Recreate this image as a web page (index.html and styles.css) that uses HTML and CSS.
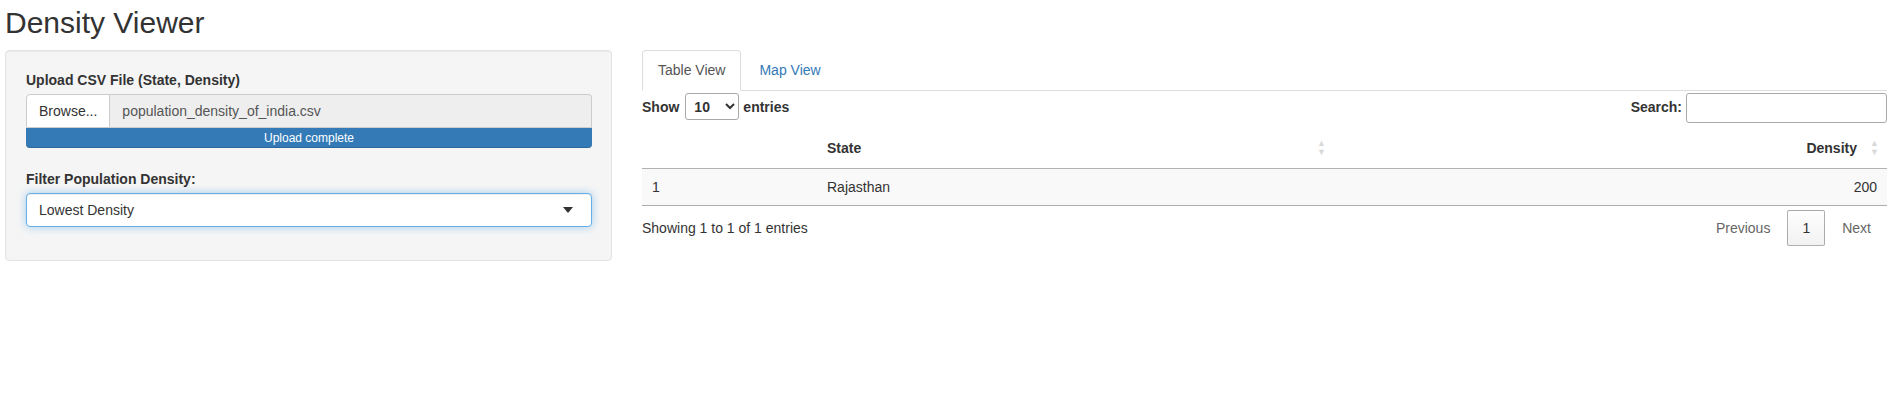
FILE: index.html
```html
<!DOCTYPE html>
<html>
<head>
<meta charset="utf-8">
<title>Density Viewer</title>
<link rel="stylesheet" href="styles.css">
</head>
<body>
<div class="page">
  <h2 class="title">Density Viewer</h2>
  <div class="layout">
    <div class="well">
      <div class="form-group">
        <label class="lbl">Upload CSV File (State, Density)</label>
        <div class="input-group">
          <span class="btn-browse">Browse...</span>
          <span class="file-name">population_density_of_india.csv</span>
        </div>
        <div class="progress">Upload complete</div>
      </div>
      <div class="form-group last">
        <label class="lbl">Filter Population Density:</label>
        <div class="selectize">
          <span>Lowest Density</span>
          <span class="caret"></span>
        </div>
      </div>
    </div>
    <div class="main">
      <ul class="tabs">
        <li class="tab active">Table View</li>
        <li class="tab">Map View</li>
      </ul>
      <div class="dt">
        <div class="dt-top">
          <label class="dt-len">Show <select class="len-select"><option>10</option></select> entries</label>
          <label class="dt-search">Search: <input class="search-input" type="text"></label>
        </div>
        <table class="dt-table">
          <thead>
            <tr>
              <th class="c-idx"></th>
              <th class="c-state sortable">State<span class="sort"><i>&#9650;</i><i>&#9660;</i></span></th>
              <th class="c-dens sortable right">Density<span class="sort"><i>&#9650;</i><i>&#9660;</i></span></th>
            </tr>
          </thead>
          <tbody>
            <tr class="odd">
              <td class="cell">1</td>
              <td class="cell">Rajasthan</td>
              <td class="cell right">200</td>
            </tr>
          </tbody>
        </table>
        <div class="dt-bottom">
          <div class="dt-info">Showing 1 to 1 of 1 entries</div>
          <div class="dt-paging">
            <span class="pg disabled">Previous</span>
            <span class="pg current">1</span>
            <span class="pg disabled">Next</span>
          </div>
        </div>
      </div>
    </div>
  </div>
</div>
</body>
</html>
```

FILE: styles.css
```css
* { box-sizing: border-box; }
html, body {
  margin: 0;
  padding: 0;
  background: #fff;
  font-family: "Liberation Sans", Arial, Helvetica, sans-serif;
  font-size: 14px;
  line-height: 20px;
  color: #333;
}
.page {
  padding: 6px 0 0 5px;
}
.title {
  margin: 0 0 11px 0;
  font-size: 30px;
  font-weight: 500;
  line-height: 33px;
  color: #333;
}
.layout {
  display: grid;
  grid-template-columns: 607px 1245px;
  column-gap: 30px;
  align-items: start;
}
.well {
  background: #f5f5f5;
  border: 1px solid #e3e3e3;
  border-radius: 4px;
  box-shadow: inset 0 1px 1px rgba(0,0,0,0.05);
  padding: 19px 19px 19px 20px;
}
.form-group { margin-bottom: 21px; }
.form-group.last { margin-bottom: 14px; }
.lbl {
  display: block;
  font-weight: 700;
  margin-bottom: 4px;
}
.input-group {
  display: flex;
  height: 34px;
}
.btn-browse {
  display: flex;
  align-items: center;
  padding: 6px 12px;
  background: #fff;
  border: 1px solid #ccc;
  border-radius: 4px 0 0 0;
  color: #333;
}
.file-name {
  flex: 1;
  display: flex;
  align-items: center;
  padding: 6px 12px;
  background: #eee;
  border: 1px solid #ccc;
  border-left: none;
  border-radius: 0 4px 0 0;
  color: #555;
}
.progress {
  height: 20px;
  background: #337ab7;
  border-radius: 0 0 4px 4px;
  color: #fff;
  font-size: 12px;
  line-height: 20px;
  text-align: center;
  box-shadow: inset 0 -1px 0 rgba(0,0,0,0.15);
}
.selectize {
  display: flex;
  align-items: center;
  justify-content: space-between;
  height: 34px;
  padding: 6px 18px 6px 12px;
  background: #fff;
  border: 1px solid #66afe9;
  border-radius: 4px;
  box-shadow: inset 0 1px 1px rgba(0,0,0,0.075), 0 0 8px rgba(102,175,233,0.6);
  color: #333;
}
.caret {
  width: 0;
  height: 0;
  border-style: solid;
  border-width: 6px 5px 0 5px;
  border-color: #333 transparent transparent transparent;
}
.main { min-width: 0; }
.tabs {
  list-style: none;
  margin: 0;
  padding: 0;
  display: flex;
  border-bottom: 1px solid #ddd;
}
.tab {
  margin: 0 2px -1px 0;
  padding: 9px 15px 10px 15px;
  border: 1px solid transparent;
  border-radius: 4px 4px 0 0;
  color: #337ab7;
  line-height: 20px;
}
.tab.active {
  color: #555;
  background: #fff;
  border-color: #ddd #ddd transparent #ddd;
}
.dt-top {
  display: flex;
  justify-content: space-between;
  align-items: center;
  height: 31px;
}
.dt-len, .dt-search {
  font-weight: 700;
  display: flex;
  align-items: center;
  gap: 4px;
}
.len-select {
  font-family: inherit;
  font-weight: 700;
  font-size: 14px;
  height: 27px;
  width: 54px;
  padding: 0 4px;
  margin-left: 2px;
  border: 1px solid #aaa;
  border-radius: 3px;
  background: #fff;
  color: #333;
}
.search-input {
  width: 201px;
  height: 30px;
  border: 1px solid #aaa;
  border-radius: 3px;
  padding: 4px;
  margin: 2px 0 0 0;
  background: #fff;
  font-family: inherit;
}
.dt-table {
  width: 100%;
  border-collapse: collapse;
  margin-top: 6px;
  table-layout: fixed;
}
.dt-table th {
  font-weight: 700;
  text-align: left;
  padding: 10px 30px 10px 10px;
  border-bottom: 1px solid rgba(0,0,0,0.3);
  position: relative;
  color: #333;
}
.dt-table .cell {
  padding: 8px 10px;
  border-bottom: 1px solid rgba(0,0,0,0.3);
  color: #333;
}
.dt-table .right { text-align: right; }
.dt-table tr.odd .cell { background: #f9f9f9; }
.c-idx { width: 175px; }
.c-state { width: 517px; }
.sort {
  position: absolute;
  right: 8px;
  top: 50%;
  transform: translateY(-50%);
  display: flex;
  flex-direction: column;
  align-items: center;
  color: #000;
  opacity: 0.15;
  font-size: 9px;
  line-height: 9px;
}
.sort i { font-style: normal; }
.dt-bottom {
  display: flex;
  justify-content: space-between;
  align-items: center;
  padding-top: 4px;
}
.dt-info { color: #333; }
.dt-paging {
  display: flex;
  align-items: center;
  margin-right: 1px;
}
.pg {
  padding: 7px 14px;
  margin-left: 2px;
  border: 1px solid transparent;
  border-radius: 2px;
  line-height: 20px;
  color: #666;
}
.pg.current {
  color: #333;
  border-color: rgba(0,0,0,0.3);
  background: linear-gradient(to bottom, rgba(230,230,230,0.05) 0%, rgba(0,0,0,0.05) 100%);
}
```
